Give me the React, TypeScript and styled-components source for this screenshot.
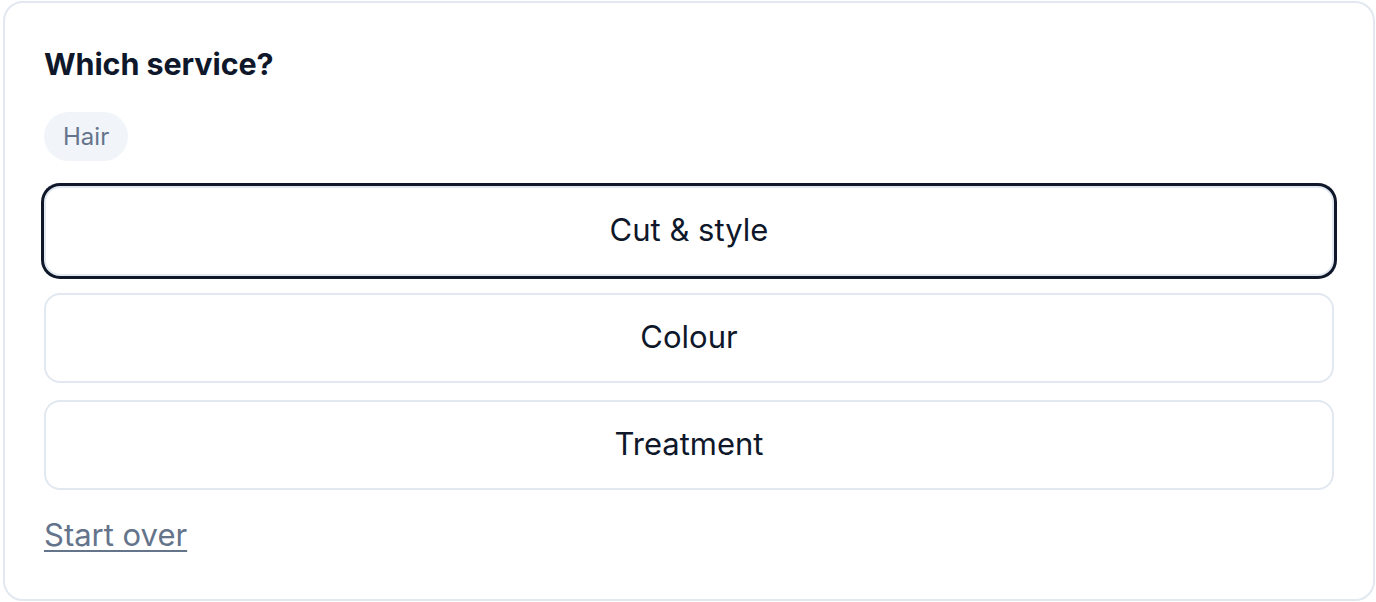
import React, { useState } from "react";
import styled, { createGlobalStyle } from "styled-components";

const GlobalStyle = createGlobalStyle`
  * { box-sizing: border-box; }
  html, body { margin: 0; padding: 0; background: #ffffff; }
  body { font-family: Inter, "Noto Sans", "Liberation Sans", sans-serif; }
`;

const Page = styled.div`
  padding: 1px 1px 1px 3px;
`;

const Card = styled.section`
  height: 600px;
  border: 2px solid #e2e8f0;
  border-radius: 20px;
  background: #ffffff;
  padding: 41px 39px 0 39px;
  display: flex;
  flex-direction: column;
  align-items: flex-start;
`;

const Title = styled.h2`
  margin: 0;
  font-size: 30.5px;
  line-height: 40px;
  font-weight: 700;
  color: #0f172a;
  letter-spacing: -0.1px;
`;

const Chip = styled.span`
  margin-top: 28px;
  display: inline-flex;
  align-items: center;
  height: 49px;
  padding: 0 19px;
  border-radius: 999px;
  background: #f1f5f9;
  color: #64748b;
  font-size: 24px;
  line-height: 29px;
`;

const Options = styled.div`
  margin-top: 25px;
  width: 100%;
  display: flex;
  flex-direction: column;
  gap: 17px;
`;

const Option = styled.button<{ $selected: boolean }>`
  height: 90px;
  width: 100%;
  border: 2px solid #e2e8f0;
  border-radius: 16px;
  background: #ffffff;
  color: #0f172a;
  font-family: inherit;
  font-size: 31px;
  line-height: 36px;
  font-weight: 400;
  cursor: pointer;
  box-shadow: ${(p) => (p.$selected ? "0 0 0 3px #0f172a" : "none")};
  padding: 0 0 2px 0;
`;

const StartOver = styled.a`
  margin-top: 26px;
  font-size: 31px;
  line-height: 38px;
  color: #64748b;
  text-decoration: underline;
  text-underline-offset: 4px;
  text-decoration-thickness: 2px;
  cursor: pointer;
`;

const services = ["Cut & style", "Colour", "Treatment"];

export default function App() {
  const [selected, setSelected] = useState(0);
  return (
    <>
      <GlobalStyle />
      <Page>
        <Card>
          <Title>Which service?</Title>
          <Chip>Hair</Chip>
          <Options>
            {services.map((s, i) => (
              <Option key={s} $selected={i === selected} onClick={() => setSelected(i)}>
                {s}
              </Option>
            ))}
          </Options>
          <StartOver>Start over</StartOver>
        </Card>
      </Page>
    </>
  );
}
